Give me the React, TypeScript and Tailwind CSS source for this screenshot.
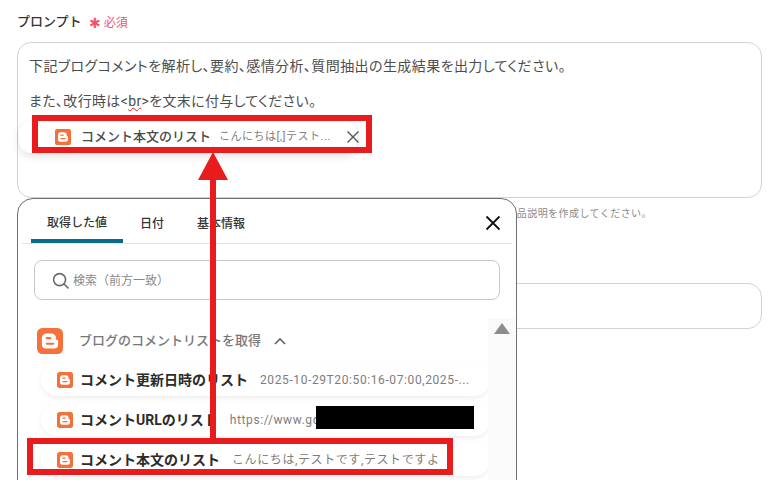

function BloggerIcon({ size, radius }: { size: number; radius: number }) {
  return (
    <svg width={size} height={size} viewBox="0 0 24 24" className="shrink-0">
      <rect width="24" height="24" rx={radius} fill="#f4713b" />
      <path
        d="M9 5h4.2A4.3 4.3 0 0 1 17.5 9.3v.7c0 .6.4 1 1 1h.2c.5 0 .8.4.8.8v3.4A3.8 3.8 0 0 1 15.7 19H8.3a3.8 3.8 0 0 1-3.8-3.8V9.5A4.5 4.5 0 0 1 9 5z"
        fill="#fff"
      />
      <rect x="8" y="8.4" width="5.2" height="1.9" rx="0.95" fill="#f4713b" />
      <rect x="8" y="13.6" width="8" height="1.9" rx="0.95" fill="#f4713b" />
    </svg>
  );
}

function Row({ name, value, className }: { name: string; value: string; className: string }) {
  return (
    <div className={`flex items-center rounded-[16px] bg-white pl-4 shadow-[0_2px_5px_rgba(0,0,0,0.07)] ${className}`}>
      <BloggerIcon size={16} radius={4} />
      <span className="ml-[7px] whitespace-nowrap text-[14px] font-bold leading-5 text-[#2b2b2b]">{name}</span>
      <span className="ml-[12px] whitespace-nowrap text-[12px] leading-5 tracking-[0.6px] text-[#7d7d7d]">{value}</span>
    </div>
  );
}

export default function App() {
  return (
    <div className="relative h-[480px] w-[772px] overflow-hidden bg-white font-['Roboto','Noto_Sans_CJK_JP',sans-serif]">
      <div className="flex flex-col pl-[17px] pr-[10px] pt-[13px]">
        <div className="flex h-[18px] items-center">
          <span className="text-[13px] font-medium leading-[18px] text-[#333]">プロンプト</span>
          <span className="ml-[7px] pt-[2px] text-[14px] leading-[18px] text-[#f0566a]">✱</span>
          <span className="ml-[3px] pt-[2px] text-[12px] leading-[18px] text-[#f0566a]">必須</span>
        </div>
        <div className="mt-[11px] h-[156px] rounded-[14px] border border-[#cfd3da] px-[11px] pt-[13px] text-[14px] leading-[20px] text-[#4d4d4d]">
          <p className="tracking-[0.42px] [font-feature-settings:'palt']">下記ブログコメントを解析し、要約、感情分析、質問抽出の生成結果を出力してください。</p>
          <p className="mt-[15px] tracking-[0.35px] [font-feature-settings:'palt']">
            また、改行時は&lt;<span className="underline decoration-wavy decoration-[#e11d1d] decoration-1">br</span>&gt;を文末に付与してください。
          </p>
          <div className="-ml-[10px] mt-[10px] flex h-[32px] w-[338px] items-center rounded-[12px] bg-white pl-[36px] shadow-[0_3px_10px_rgba(0,0,0,0.12)]">
            <BloggerIcon size={16} radius={3} />
            <span className="ml-[10px] whitespace-nowrap text-[13px] font-medium text-[#4a4a4a]">コメント本文のリスト</span>
            <span className="ml-[8px] whitespace-nowrap text-[11px] tracking-[0.5px] text-[#808080]">こんにちは[,]テスト...</span>
            <svg width="14" height="14" viewBox="0 0 14 14" className="ml-[15px] shrink-0" stroke="#555" strokeWidth="1.4">
              <path d="M1.5 1.5l11 11M12.5 1.5l-11 11" />
            </svg>
          </div>
        </div>
        <p className="mt-[8px] h-4 pr-[110px] text-right text-[10px] leading-4 tracking-[0.45px] text-[#8a8a8a]">品説明を作成してください。</p>
        <div className="mt-[61px] h-[46px] rounded-[14px] border border-[#cfd3da]" />
      </div>

      {/* Popup over the form */}
      <div className="absolute left-[17px] top-[198px] h-[300px] w-[500px] rounded-t-[16px] border border-[#6f6f6f] bg-white">
        <div className="mx-1 flex h-[45px] items-start border-b border-[#e3e3e3] pl-[9px]">
          <div className="flex h-[44px] w-[92px] items-center justify-center border-b-4 border-[#0b6b8a] pt-[7px] text-[12px] font-medium text-[#333]">取得した値</div>
          <div className="ml-[17px] flex h-[44px] items-center pt-[6px] text-[12px] font-medium text-[#333]">日付</div>
          <div className="ml-[33px] flex h-[44px] items-center pt-[6px] text-[12px] font-medium text-[#333]">基本情報</div>
          <svg width="16" height="16" viewBox="0 0 16 16" className="ml-auto mr-[11px] mt-[16px]" stroke="#111" strokeWidth="1.8">
            <path d="M1.5 1.5l13 13M14.5 1.5l-13 13" />
          </svg>
        </div>
        <div className="ml-4 mt-[16px] flex h-10 w-[466px] items-center rounded-[8px] border border-[#c8c8c8] pl-[17px] pt-[2px]">
          <svg width="18" height="18" viewBox="0 0 18 18" fill="none" stroke="#6b6b6b" strokeWidth="1.6">
            <circle cx="7.6" cy="7.6" r="6" />
            <path d="M12 12l4.4 4.4" />
          </svg>
          <span className="ml-[3px] text-[12px] text-[#8a8a8a]">検索（前方一致）</span>
        </div>
        <div className="ml-[19px] mt-[27px] flex h-[27px] items-center">
          <BloggerIcon size={26} radius={5} />
          <span className="ml-4 text-[13px] font-medium text-[#777]">ブログのコメントリストを取得</span>
          <svg width="12" height="8" viewBox="0 0 12 8" className="ml-[13px]" fill="none" stroke="#666" strokeWidth="1.7">
            <path d="M1 7l5-5 5 5" />
          </svg>
        </div>
        <div className="mt-[9px] flex flex-col gap-[7px] pl-[23px] pr-[26px]">
          <Row name="コメント更新日時のリスト" value="2025-10-29T20:50:16-07:00,2025-..." className="h-[33px]" />
          <Row name="コメントURLのリスト" value="https://www.go" className="h-[33px]" />
          <Row name="コメント本文のリスト" value="こんにちは,テストです,テストですよ" className="h-[33px]" />
        </div>
        <div className="absolute right-[1px] top-[119px] flex h-[180px] w-[27px] justify-center bg-[#fafafa] pt-[5px]">
          <div className="h-0 w-0 border-x-[8px] border-b-[11px] border-x-transparent border-b-[#8c8c8c]" />
        </div>
      </div>

      {/* Annotations */}
      <div className="absolute left-[316px] top-[406px] h-[23px] w-[158px] bg-black" />
      <div className="absolute left-[32px] top-[115px] h-[38px] w-[340px] border-[6px] border-[#e81c1c]" />
      <div className="absolute left-[27px] top-[438px] h-[37px] w-[426px] border-[6px] border-[#e81c1c]" />
      <div className="absolute left-[210px] top-[178px] h-[262px] w-[6px] bg-[#e81c1c]" />
      <div className="absolute left-[198px] top-[152px] h-0 w-0 border-x-[15px] border-b-[28px] border-x-transparent border-b-[#e81c1c]" />
    </div>
  );
}
